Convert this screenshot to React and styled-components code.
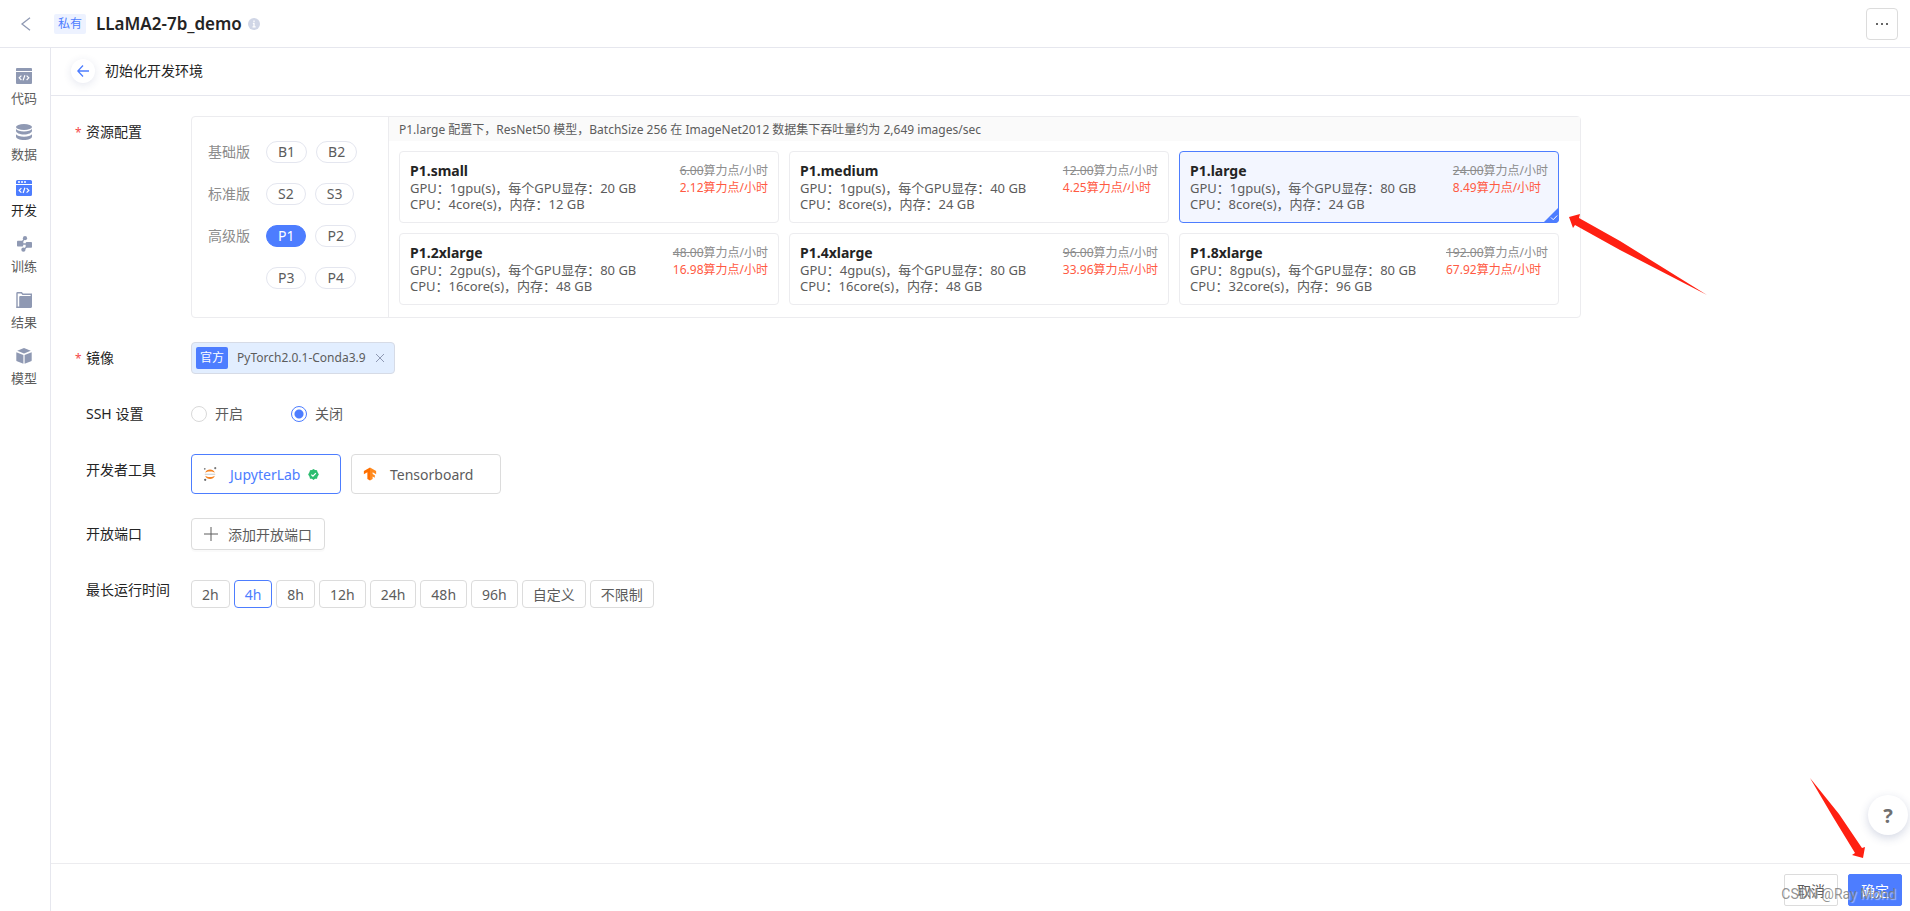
import React, { useState } from "react";
import styled, { createGlobalStyle, css } from "styled-components";

const blue = "#4d7dff";

const Global = createGlobalStyle`
  *, *::before, *::after { box-sizing: border-box; }
  body { margin: 0; background: #fff; }
  body, button, input { font-family: "Noto Sans", "Noto Sans CJK SC", sans-serif; font-size: 14px; }
  button { padding: 0; margin: 0; cursor: pointer; white-space: nowrap; }
`;

const Page = styled.div`
  position: relative;
  display: flex;
  flex-direction: column;
  min-height: 100vh;
  color: #242424;
  line-height: 20px;
`;

const TopBar = styled.header`
  display: flex;
  align-items: center;
  height: 48px;
  padding: 0 12px 0 20px;
  border-bottom: 1px solid #e6e7ee;
`;

const IconButton = styled.button`
  display: grid;
  place-items: center;
  width: 12px;
  height: 24px;
  border: 0;
  background: none;
  color: #8f99b3;
`;

const PrivateTag = styled.span`
  height: 20px;
  margin: 0 10px 0 22px;
  padding: 0 4px;
  border-radius: 2px;
  background: #edf2ff;
  color: ${blue};
  font-size: 12px;
`;

const Title = styled.h1`
  margin: 0 6px 0 0;
  font-size: 17px;
  font-weight: 600;
`;

const MoreButton = styled.button`
  display: grid;
  place-items: center;
  width: 32px;
  height: 32px;
  margin-left: auto;
  border: 1px solid #dcdcdc;
  border-radius: 4px;
  background: #fff;
`;

const Body = styled.div`
  display: flex;
  flex: 1;
`;

const Side = styled.nav`
  display: flex;
  flex-direction: column;
  gap: 16px;
  width: 51px;
  padding: 20px 2px 0 0;
  border-right: 1px solid #e6e7ee;
`;

const SideLink = styled.a`
  display: flex;
  flex-direction: column;
  align-items: center;
  gap: 4px;
  height: 40px;
  font-size: 13px;
  text-decoration: none;
  color: ${(p) => (p.$active ? "#242424" : "#5c5c5c")};
  svg { color: ${(p) => (p.$active ? blue : "#8f99b3")}; flex: none; }
`;

const Main = styled.main`
  display: flex;
  flex: 1;
  flex-direction: column;
  min-width: 0;
`;

const SubBar = styled.div`
  display: flex;
  align-items: center;
  gap: 10px;
  height: 48px;
  padding: 0 20px 2px;
  border-bottom: 1px solid #e6e7ee;
`;

const RoundButton = styled.button`
  display: grid;
  place-items: center;
  width: 24px;
  height: 24px;
  border: 0;
  border-radius: 50%;
  background: #fff;
  color: ${blue};
  box-shadow: 0 2px 8px rgba(40, 60, 120, 0.12);
`;

const SubTitle = styled.h2`
  margin: 0;
  font-size: 14px;
  font-weight: 400;
`;

const Form = styled.form`
  display: flex;
  flex: 1;
  flex-direction: column;
  gap: 24px;
  padding: 20px 24px;
`;

const Field = styled.div`
  display: grid;
  grid-template-columns: 105px minmax(0, 1fr);
  margin-left: 11px;
`;

const FieldLabel = styled.div`
  margin-left: ${(p) => (p.$required ? -11 : 0)}px;
  line-height: 32px;
  white-space: nowrap;
`;

const Star = styled.span`
  display: inline-block;
  width: 11px;
  color: #f5484a;
  font-size: 12px;
  line-height: 16px;
`;

const Spec = styled.section`
  position: relative;
  display: grid;
  grid-template-columns: 197px minmax(0, 1fr);
  max-width: 1390px;
  border: 1px solid #ececef;
  border-radius: 4px;
`;

const Tiers = styled.div`
  display: flex;
  flex-direction: column;
  gap: 20px;
  padding: 24px 0 28px 16px;
  border-right: 1px solid #ececef;
`;

const TierRow = styled.div`
  display: grid;
  grid-template-columns: 58px 1fr;
  align-items: center;
  height: 22px;
  color: #8c8c8c;
`;

const Pills = styled.div`
  display: flex;
  gap: 9px;
`;

const Pill = styled.button`
  height: 22px;
  padding: 0 11px;
  border: 1px solid ${(p) => (p.$active ? blue : "#e4e6ef")};
  border-radius: 11px;
  background: ${(p) => (p.$active ? blue : "#fff")};
  color: ${(p) => (p.$active ? "#fff" : "#5c5c5c")};
  line-height: 20px;
`;

const Notice = styled.p`
  margin: 0;
  height: 24px;
  padding: 1px 10px 0;
  background: #fafafa;
  color: #5c5c5c;
  font-size: 12px;
  line-height: 24px;
`;

const Cards = styled.div`
  display: grid;
  grid-template-columns: repeat(3, minmax(0, 1fr));
  gap: 10px;
  padding: 10px 21px 12px 10px;
`;

const Card = styled.button`
  position: relative;
  display: flex;
  justify-content: space-between;
  align-items: flex-start;
  height: 72px;
  padding: 10px;
  text-align: left;
  border: 1px solid ${(p) => (p.$active ? blue : "#ececef")};
  border-radius: 4px;
  background: ${(p) => (p.$active ? "#f3f6ff" : "#fff")};
`;

const CardName = styled.strong`
  display: block;
  color: #242424;
  font-size: 14px;
  font-weight: 700;
  line-height: 18px;
`;

const CardLine = styled.span`
  display: block;
  color: #5c5c5c;
  font-size: 13px;
  line-height: 16px;
`;

const Price = styled.span`
  display: block;
  color: ${(p) => (p.$old ? "#8c8c8c" : "#ff5a43")};
  font-size: 12px;
  line-height: ${(p) => (p.$old ? 18 : 16)}px;
`;

const Corner = styled.span`
  position: absolute;
  right: -1px;
  bottom: -1px;
  display: flex;
  overflow: hidden;
  border-bottom-right-radius: 4px;
  color: ${blue};
`;

const ImageBox = styled.div`
  display: inline-flex;
  align-items: center;
  height: 32px;
  padding: 0 8px 0 4px;
  border: 1px solid #d6dbe6;
  border-radius: 4px;
  background: #e2eeff;
  color: #5c5c5c;
  font-size: 12px;
`;

const OfficialTag = styled.span`
  height: 22px;
  margin-right: 9px;
  padding: 0 4px;
  border-radius: 2px;
  background: ${blue};
  color: #fff;
  font-size: 12px;
  line-height: 22px;
`;

const ClearButton = styled(IconButton)`
  margin-left: 8px;
`;

const RadioRow = styled.div`
  display: flex;
  align-items: center;
  height: 32px;
  color: #5c5c5c;
`;

const RadioLabel = styled.label`
  display: flex;
  align-items: center;
  gap: 8px;
  width: 100px;
  cursor: pointer;
`;

const Radio = styled.input`
  appearance: none;
  width: 16px;
  height: 16px;
  margin: 0;
  border: 1px solid #d9d9d9;
  border-radius: 50%;
  background: #fff;
  &:checked {
    border-color: ${blue};
    background: radial-gradient(circle, ${blue} 4px, #fff 5px);
  }
`;

const Options = styled.div`
  display: flex;
  flex-wrap: wrap;
  gap: ${(p) => p.$gap}px;
  padding-top: ${(p) => p.$top || 0}px;
`;

const box = css`
  display: flex;
  align-items: center;
  border: 1px solid ${(p) => (p.$active ? blue : "#dcdcdc")};
  border-radius: 4px;
  background: #fff;
  color: ${(p) => (p.$active ? blue : "#5c5c5c")};
`;

const ToolButton = styled.button`
  ${box}
  width: 150px;
  height: 40px;
  padding-left: 11px;
  svg:first-child { margin-right: 13px; }
  svg:last-child:not(:first-child) { margin-left: 8px; }
`;

const AddButton = styled.button`
  ${box}
  height: 32px;
  padding: 0 12px;
  gap: 10px;
  box-shadow: 0 2px 0 rgba(0, 0, 0, 0.02);
`;

const HourButton = styled.button`
  ${box}
  height: 28px;
  padding: 0 10px;
`;

const Footer = styled.footer`
  display: flex;
  justify-content: flex-end;
  gap: 10px;
  padding: 10px 8px 5px;
  border-top: 1px solid #ececef;
`;

const FootButton = styled.button`
  width: 54px;
  height: 32px;
  border: 1px solid ${(p) => (p.$primary ? blue : "#dcdcdc")};
  border-radius: 2px;
  background: ${(p) => (p.$primary ? blue : "#fff")};
  color: ${(p) => (p.$primary ? "#fff" : "#5c5c5c")};
`;

const Help = styled.button`
  position: absolute;
  right: 2px;
  bottom: 76px;
  width: 40px;
  height: 40px;
  border: 0;
  border-radius: 50%;
  background: #fff;
  color: #707070;
  font-size: 20px;
  font-weight: 700;
  box-shadow: 0 3px 10px rgba(40, 60, 120, 0.2);
`;

const Watermark = styled.span`
  position: absolute;
  right: 14px;
  bottom: 7px;
  color: rgba(120, 120, 120, 0.8);
  font-family: Roboto, sans-serif;
  font-size: 14px;
  text-shadow: 1px 1px 1px rgba(255, 255, 255, 0.5);
  pointer-events: none;
`;

const PanelArrow = styled.svg`
  position: absolute;
  right: -129px;
  top: 95px;
  pointer-events: none;
`;

const FooterArrow = styled.svg`
  position: absolute;
  right: 40px;
  bottom: 51px;
  pointer-events: none;
`;

const Svg = ({ size = 16, children, ...rest }) => (
  <svg width={size} height={size} viewBox="0 0 16 16" fill="currentColor" aria-hidden="true" {...rest}>
    {children}
  </svg>
);

const sideItems = [
  ["代码", <>
    <path d="M1 0h14a1 1 0 0 1 1 1v2H0V1a1 1 0 0 1 1-1zM0 4h16v11a1 1 0 0 1-1 1H1a1 1 0 0 1-1-1z" />
    <path d="M5.400 7.600 3.200 9.800l2.200 2.200M10.600 7.600l2.200 2.200-2.200 2.200M8.900 7.200 7.100 12.400" fill="none" stroke="#fff" strokeWidth="1.200" />
  </>],
  ["数据", <>
    <ellipse cx="8" cy="3" rx="8" ry="3" />
    <path d="M0 5c1.200 1.600 4 2.500 8 2.500S14.800 6.600 16 5v1.800C16 8.900 12.400 10.500 8 10.500S0 8.900 0 6.800z" />
    <path d="M0 10.300c1.200 1.600 4 2.500 8 2.500s6.800-.9 8-2.500v2.200c0 2-3.600 3.500-8 3.500s-8-1.500-8-3.500z" />
  </>],
  ["开发", <>
    <path d="M1.500 0h13A1.500 1.500 0 0 1 16 1.500V4H0V1.500A1.500 1.500 0 0 1 1.500 0zM0 5h16v9.500a1.500 1.500 0 0 1-1.500 1.500h-13A1.500 1.500 0 0 1 0 14.500z" />
    <path d="M2 2h2M5 2h2M8 2h2" stroke="#fff" strokeWidth="1.400" />
    <path d="M5.400 8.200 3.200 10.400l2.200 2.200M10.600 8.200l2.200 2.200-2.200 2.200M8.900 7.800 7.100 13" fill="none" stroke="#fff" strokeWidth="1.200" />
  </>],
  ["训练", <>
    <circle cx="9" cy="2.200" r="2.100" />
    <circle cx="7.400" cy="13.700" r="2.100" />
    <rect x="1" y="4.800" width="6.200" height="5.700" rx=".8" />
    <rect x="9.800" y="6" width="6.200" height="5.700" rx=".8" />
    <path d="M8.500 2.500 6.500 5.500v2.500h4v3L8 13.500" fill="none" stroke="currentColor" strokeWidth="1.300" />
  </>],
  ["结果", <>
    <path d="M1 16V1.200C1 .9 1.200.7 1.500.7h4l1.300 1.500h8.500V4" fill="none" stroke="currentColor" strokeWidth="1.400" />
    <path d="M3.200 5.400c0-.8.5-1.300 1.300-1.300H16v10.700c0 .7-.5 1.200-1.200 1.200H.6v-1.500h2.600z" />
  </>],
  ["模型", <>
    <path d="M8 0l6.800 2.700L8 5.400 1.200 2.700z" />
    <path d="M.3 4.200 7.400 7v8.800L1 13.300a1 1 0 0 1-.7-1zM15.700 4.200 8.600 7v8.800l6.400-2.500a1 1 0 0 0 .7-1z" />
  </>],
];

const tiers = [
  ["基础版", ["B1", "B2"]],
  ["标准版", ["S2", "S3"]],
  ["高级版", ["P1", "P2"]],
  ["", ["P3", "P4"]],
];

const specs = [
  { name: "P1.small", gpus: 1, vram: 20, cores: 4, ram: 12, old: "6.00", price: "2.12" },
  { name: "P1.medium", gpus: 1, vram: 40, cores: 8, ram: 24, old: "12.00", price: "4.25" },
  { name: "P1.large", gpus: 1, vram: 80, cores: 8, ram: 24, old: "24.00", price: "8.49" },
  { name: "P1.2xlarge", gpus: 2, vram: 80, cores: 16, ram: 48, old: "48.00", price: "16.98" },
  { name: "P1.4xlarge", gpus: 4, vram: 80, cores: 16, ram: 48, old: "96.00", price: "33.96" },
  { name: "P1.8xlarge", gpus: 8, vram: 80, cores: 32, ram: 96, old: "192.00", price: "67.92" },
];

const hours = ["2h", "4h", "8h", "12h", "24h", "48h", "96h", "自定义", "不限制"];

function SpecCard({ spec, active, onSelect }) {
  return (
    <Card type="button" $active={active} aria-pressed={active} onClick={onSelect}>
      <span>
        <CardName>{spec.name}</CardName>
        <CardLine>{`GPU：${spec.gpus}gpu(s)，每个GPU显存：${spec.vram} GB`}</CardLine>
        <CardLine>{`CPU：${spec.cores}core(s)，内存：${spec.ram} GB`}</CardLine>
      </span>
      <span>
        <Price $old><s>{spec.old}</s>算力点/小时</Price>
        <Price>{spec.price}算力点/小时</Price>
      </span>
      {active && (
        <Corner>
          <Svg>
            <path d="M16 0v16H0z" />
            <path d="M8 10.500l2.200 2.200 4-4.200" fill="none" stroke="#fff" />
          </Svg>
        </Corner>
      )}
    </Card>
  );
}

export default function App() {
  const [tier, setTier] = useState("P1");
  const [spec, setSpec] = useState("P1.large");
  const [ssh, setSsh] = useState("off");
  const [tool, setTool] = useState("JupyterLab");
  const [hour, setHour] = useState("4h");

  return (
    <Page>
      <Global />
      <TopBar>
        <IconButton type="button" aria-label="返回">
          <svg width="12" height="14" viewBox="0 0 12 14" fill="none" stroke="currentColor" strokeWidth="1.300"><path d="M10 .8 2 7l8 6.200" /></svg>
        </IconButton>
        <PrivateTag>私有</PrivateTag>
        <Title>LLaMA2-7b_demo</Title>
        <Svg size={12} color="#d0d6e6">
          <circle cx="8" cy="8" r="8" />
          <path d="M8 3.200v2.200M6.500 7.200H8v4.300M6 11.800h4.200" fill="none" stroke="#fff" strokeWidth="1.700" />
        </Svg>
        <MoreButton type="button" aria-label="更多">
          <svg width="12" height="2" viewBox="0 0 12 2" fill="#666"><path d="M0 0h2v2H0zM5 0h2v2H5zM10 0h2v2h-2z" /></svg>
        </MoreButton>
      </TopBar>
      <Body>
        <Side>
          {sideItems.map(([label, icon]) => (
            <SideLink key={label} href="#" $active={label === "开发"}>
              <Svg>{icon}</Svg>
              {label}
            </SideLink>
          ))}
        </Side>
        <Main>
          <SubBar>
            <RoundButton type="button" aria-label="返回">
              <svg width="12" height="12" viewBox="0 0 12 12" fill="none" stroke="currentColor" strokeWidth="1.300"><path d="M12 6H.8M6 .5.8 6 6 11.500" /></svg>
            </RoundButton>
            <SubTitle>初始化开发环境</SubTitle>
          </SubBar>
          <Form id="env" onSubmit={(e) => e.preventDefault()}>
            <Field>
              <FieldLabel $required><Star>*</Star>资源配置</FieldLabel>
              <Spec>
                <Tiers>
                  {tiers.map(([label, items]) => (
                    <TierRow key={items[0]}>
                      <span>{label}</span>
                      <Pills>
                        {items.map((t) => (
                          <Pill key={t} type="button" $active={t === tier} onClick={() => setTier(t)}>{t}</Pill>
                        ))}
                      </Pills>
                    </TierRow>
                  ))}
                </Tiers>
                <div>
                  <Notice>P1.large 配置下，ResNet50 模型，BatchSize 256 在 ImageNet2012 数据集下吞吐量约为 2,649 images/sec</Notice>
                  <Cards>
                    {specs.map((s) => (
                      <SpecCard key={s.name} spec={s} active={s.name === spec} onSelect={() => setSpec(s.name)} />
                    ))}
                  </Cards>
                </div>
                <PanelArrow width="141" height="84" viewBox="0 0 141 84" fill="#ff2012" aria-hidden="true">
                  <path d="M1 5 12 2 11 6 52 29 139 83 52 38 7 13 5 16z" />
                </PanelArrow>
              </Spec>
            </Field>
            <Field>
              <FieldLabel $required><Star>*</Star>镜像</FieldLabel>
              <div>
                <ImageBox>
                  <OfficialTag>官方</OfficialTag>
                  PyTorch2.0.1-Conda3.9
                  <ClearButton type="button" aria-label="清除">
                    <svg width="8" height="8" viewBox="0 0 8 8" fill="none" stroke="currentColor"><path d="M0 0l8 8M8 0 0 8" /></svg>
                  </ClearButton>
                </ImageBox>
              </div>
            </Field>
            <Field>
              <FieldLabel>SSH 设置</FieldLabel>
              <RadioRow>
                <RadioLabel><Radio type="radio" name="ssh" checked={ssh === "on"} onChange={() => setSsh("on")} />开启</RadioLabel>
                <RadioLabel><Radio type="radio" name="ssh" checked={ssh === "off"} onChange={() => setSsh("off")} />关闭</RadioLabel>
              </RadioRow>
            </Field>
            <Field>
              <FieldLabel>开发者工具</FieldLabel>
              <Options $gap={10}>
                <ToolButton type="button" $active={tool === "JupyterLab"} onClick={() => setTool("JupyterLab")}>
                  <Svg size={14}>
                    <path d="M2.500 6.500C4 1.500 12 1.500 13.500 6.500 11 4.600 5 4.600 2.500 6.500zM2.500 10c1.500 5 9.500 5 11 0-2.500 1.900-8.500 1.900-11 0z" fill="#f58220" />
                    <path d="M2 8.300h12" stroke="#bbb" strokeWidth=".9" />
                    <circle cx="2" cy="2" r="1" fill="#777" /><circle cx="14" cy="1.300" r="1.200" fill="#777" /><circle cx="2.500" cy="14.600" r="1.300" fill="#666" />
                  </Svg>
                  JupyterLab
                  <Svg size={11}>
                    <path d="M8 0l2.300 1.600 2.800.2.700 2.700L15.800 8l-2 3.400-.7 2.700-2.800.2L8 16l-2.300-1.700-2.800-.2-.7-2.700L.2 8l2-3.500.7-2.700 2.800-.2z" fill="#2dbd70" />
                    <path d="M4.800 8.200 7.200 10.500 11.400 6" fill="none" stroke="#fff" strokeWidth="1.800" />
                  </Svg>
                </ToolButton>
                <ToolButton type="button" $active={tool === "Tensorboard"} onClick={() => setTool("Tensorboard")}>
                  <Svg size={14}>
                    <path d="M8 .5v15l-3-1.700V6L1 8.200V4.500z" fill="#ff6f00" />
                    <path d="M8 .5l7 4v3.700L11 6v2l2.500 1.400v2.800L11 10.900v2.900l-3 1.700z" fill="#ff8a1f" />
                  </Svg>
                  Tensorboard
                </ToolButton>
              </Options>
            </Field>
            <Field>
              <FieldLabel>开放端口</FieldLabel>
              <Options $gap={10}>
                <AddButton type="button">
                  <svg width="14" height="14" viewBox="0 0 14 14" stroke="currentColor" aria-hidden="true"><path d="M7 0v14M0 7h14" /></svg>
                  添加开放端口
                </AddButton>
              </Options>
            </Field>
            <Field>
              <FieldLabel>最长运行时间</FieldLabel>
              <Options $gap={4} $top={6}>
                {hours.map((h) => (
                  <HourButton key={h} type="button" $active={h === hour} onClick={() => setHour(h)}>{h}</HourButton>
                ))}
              </Options>
            </Field>
          </Form>
          <Footer>
            <FootButton type="button">取消</FootButton>
            <FootButton type="submit" form="env" $primary>确定</FootButton>
          </Footer>
        </Main>
      </Body>
      <FooterArrow width="60" height="82" viewBox="0 0 60 82" fill="#ff2012" aria-hidden="true">
        <path d="M0 0 29 36 52 70 55 69 53 80 42 77 45 75 23 39z" />
      </FooterArrow>
      <Help type="button" aria-label="帮助">?</Help>
      <Watermark>CSDN @Ray Mond</Watermark>
    </Page>
  );
}
